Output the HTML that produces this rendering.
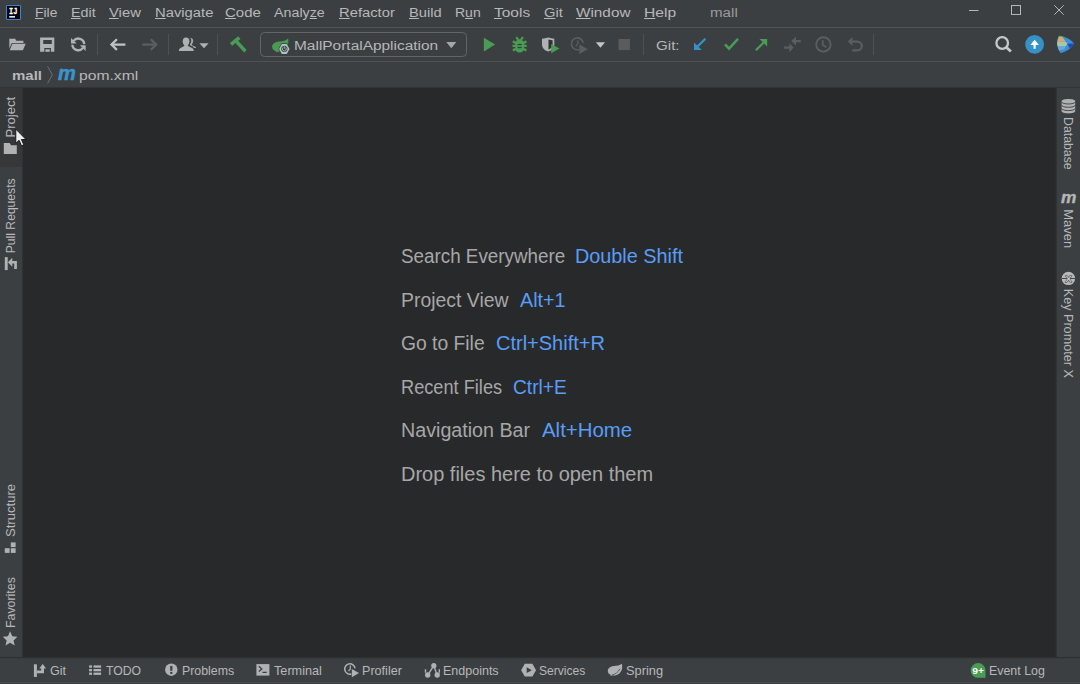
<!DOCTYPE html>
<html lang="en"><head><meta charset="utf-8"><title>mall</title><style>
html,body{margin:0;padding:0;background:#3c3f41;}
body{width:1080px;height:684px;position:relative;overflow:hidden;font-family:"Liberation Sans",sans-serif;}
.t{position:absolute;display:block;white-space:pre;line-height:20px;height:20px;transform-origin:0 0;}
.t u{text-decoration:underline;text-decoration-thickness:1px;text-underline-offset:1px;}
.r{position:absolute;}
svg.ic{position:absolute;left:0;top:0;width:1080px;height:684px;overflow:visible;}
.sec{display:contents;}
</style></head><body>
<header class="sec menubar">
<div class="r" style="left:0;top:0;width:1080px;height:27px;background:#3c3f41"></div>
<div class="r" style="left:0;top:27px;width:1080px;height:1px;background:#515151"></div>
<svg class="ic" viewBox="0 0 1080 684" width="1080" height="684">
<g id="ij-logo">
  <rect x="6.500" y="5.500" width="14" height="14" rx="0.800" fill="#000" stroke="#3584d6" stroke-width="1.100"/>
  <text x="9" y="14.300" opacity="0.990" font-family="'Liberation Mono',monospace" font-weight="700" font-size="9.200" fill="#fff" stroke="#fff" stroke-width="0.300" textLength="8.400" lengthAdjust="spacingAndGlyphs">IJ</text>
  <rect x="9.2" y="16.1" width="5.8" height="1.5" fill="#fff"/>
</g>
<g id="win-controls" stroke="#b4b6b7" stroke-width="1" fill="none">
  <path d="M969 10.5h9.5"/>
  <rect x="1011.5" y="5.5" width="9" height="9"/>
  <path d="M1054.3 5.3l9.4 9.4M1063.7 5.3l-9.4 9.4"/>
</g>
</svg>
<span class="t" style="font-size:13.7px;color:#b6b8b9;left:35.17px;top:3.35px;transform:scaleX(1.0120);"><u>F</u>ile</span>
<span class="t" style="font-size:13.7px;color:#b6b8b9;left:71.12px;top:3.27px;transform:scaleX(1.0462);"><u>E</u>dit</span>
<span class="t" style="font-size:13.7px;color:#b6b8b9;left:108.90px;top:3.25px;transform:scaleX(1.0812);"><u>V</u>iew</span>
<span class="t" style="font-size:13.7px;color:#b6b8b9;left:154.54px;top:3.25px;transform:scaleX(1.0809);"><u>N</u>avigate</span>
<span class="t" style="font-size:13.7px;color:#b6b8b9;left:225.43px;top:3.31px;transform:scaleX(1.0962);"><u>C</u>ode</span>
<span class="t" style="font-size:13.7px;color:#b6b8b9;left:274.14px;top:3.27px;transform:scaleX(1.0429);">Analy<u>z</u>e</span>
<span class="t" style="font-size:13.7px;color:#b6b8b9;left:338.90px;top:3.25px;transform:scaleX(1.0791);"><u>R</u>efactor</span>
<span class="t" style="font-size:13.7px;color:#b6b8b9;left:408.74px;top:3.25px;transform:scaleX(1.0722);"><u>B</u>uild</span>
<span class="t" style="font-size:13.7px;color:#b6b8b9;left:454.57px;top:3.35px;transform:scaleX(1.0226);">R<u>u</u>n</span>
<span class="t" style="font-size:13.7px;color:#b6b8b9;left:494.00px;top:3.40px;transform:scaleX(1.1322);"><u>T</u>ools</span>
<span class="t" style="font-size:13.7px;color:#b6b8b9;left:544.13px;top:3.25px;transform:scaleX(1.0739);"><u>G</u>it</span>
<span class="t" style="font-size:13.7px;color:#b6b8b9;left:575.90px;top:3.38px;transform:scaleX(1.1185);"><u>W</u>indow</span>
<span class="t" style="font-size:13.7px;color:#b6b8b9;left:643.89px;top:3.31px;transform:scaleX(1.1416);"><u>H</u>elp</span>
<span class="t" style="font-size:13.7px;color:#999b9c;left:710.38px;top:3.31px;transform:scaleX(1.1063);">mall</span>
</header>
<div class="sec toolbar">
<div class="r" style="left:0;top:28px;width:1080px;height:33px;background:#3c3f41"></div>
<div class="r" style="left:0;top:61px;width:1080px;height:1px;background:#515151"></div>
<div class="r combo" style="left:260px;top:32px;width:207px;height:25px;box-sizing:border-box;border:1px solid #626466;border-radius:4.5px;"></div>
<svg class="ic" viewBox="0 0 1080 684" width="1080" height="684">
<g id="tb-sep" fill="#4e5052">
  <rect x="97" y="34" width="1" height="21"/>
  <rect x="168" y="34" width="1" height="21"/>
  <rect x="217" y="34" width="1" height="21"/>
  <rect x="643" y="34" width="1" height="21"/>
  <rect x="873" y="34" width="1" height="21"/>
</g>
<g id="tb-open" fill="#afb1b3">
  <path d="M9.3 38.7h5.9l1 2.1h7.2v2.3h-11.6l-2.5 5.4z"/>
  <path d="M12.4 43.8h13.3l-2.8 6.4h-13.2z"/>
</g>
<g id="tb-save">
  <path fill="#afb1b3" fill-rule="evenodd" d="M40.1 37.6h14.2v14.2h-3.4v-3.7h-6.6v3.7h-4.2zM43.2 40h8.6v3.9h-8.6z"/>
  <rect x="45.4" y="49.3" width="4.3" height="2.5" fill="#afb1b3"/>
</g>
<g id="tb-refresh" fill="#afb1b3">
  <path d="M71 37.9v5.7h5.7z"/>
  <path d="M85.6 50.9v-5.7h-5.7z"/>
  <path fill="none" stroke="#afb1b3" stroke-width="2.4" d="M73.6 40.9a5.9 5.9 0 0 1 10.6 3.2"/>
  <path fill="none" stroke="#afb1b3" stroke-width="2.4" d="M83 47.9a5.9 5.9 0 0 1 -10.6 -3.2"/>
</g>
<g id="tb-back" fill="none" stroke="#bfc1c3" stroke-width="2.300">
  <path d="M111.500 44.600h13.900"/>
  <path d="M116.900 39.300l-5.400 5.300 5.400 5.300"/>
</g>
<g id="tb-fwd" fill="none" stroke="#5b5d5f" stroke-width="2.300">
  <path d="M142.300 44.600h13.900"/>
  <path d="M150.800 39.300l5.400 5.300-5.400 5.300"/>
</g>
<g id="tb-users" fill="#afb1b3">
  <path d="M189.2 38.4c1.6-1 4-0.300 4 2.400 0 1.500-0.500 2.700-1.300 3.500l0.100 1 3.400 1.500c0.500 0.200 0.600 0.800 0.600 1.300h-2.200c-0.300-1-1-1.600-2-2l-1.800-0.800v-1.200c0.800-0.900 1.200-2.200 1.200-3.500 0-0.900-0.200-1.700-0.600-2.300z" opacity="0.9"/>
  <path d="M186 37.500c2.200 0 3.400 1.600 3.400 3.700 0 1.600-0.600 3-1.500 3.900v1l4.200 1.800c1 0.400 1.500 1.300 1.500 2.300v0.700h-14.600v-0.700c0-1 0.500-1.900 1.500-2.300l3.700-1.800v-1c-0.900-0.900-1.500-2.300-1.500-3.900 0-2.100 1.200-3.700 3.300-3.700z"/>
  <path d="M199.400 43.300h9.200l-4.600 5z"/>
</g>
<g id="tb-build" fill="#499c54">
  <path d="M229.800 42.900l8.400-6.650 2.300 2.700-8.300 6.700z"/>
  <path d="M234.500 41.900l2.500-2.500 9.600 10.600-2.400 2.400z"/>
</g>
<g id="tb-runcfg-icon">
  <path fill="#4b9a52" d="M288.100 38.300C286.500 40.800 282.500 41.200 279 41.600C275.200 42.100 272.100 43.800 272.100 46.800C272.100 49.300 274 51 276.300 51.500C276.200 51.800 276 52 275.800 52.300C276.600 52.400 277.300 52.200 277.600 51.800C281.500 52 285.400 50.300 287.200 46.700C288.600 44 288.600 41 288.100 38.300Z"/>
  <path fill="#3c3f41" d="M281.400 43.200h5.800l3 5.700-3 5.700h-5.800l-3-5.700z"/>
  <path fill="#a9c3c2" fill-rule="evenodd" d="M281.800 43.900h5l2.700 5-2.700 5h-5l-2.700-5zM284.300 45.700a3.200 3.200 0 1 0 0.010 0z"/>
  <path fill="none" stroke="#a9c3c2" stroke-width="0.900" d="M282.900 47.500a2 2 0 1 0 2.800 0M284.300 46.400v2.400"/>
</g>
<path id="tb-combo-arrow" fill="#a4a7a9" d="M446.300 41.900h10l-5 6.400z"/>
<path id="tb-run" fill="#499c54" d="M483.900 37.800l11.200 6.800-11.200 6.800z"/>
<g id="tb-debug">
  <path fill="none" stroke="#499c54" stroke-width="2.100" d="M516.200 37.200l2.200 2.800M523 37.200l-2.200 2.800"/>
  <path fill="none" stroke="#499c54" stroke-width="2.400" d="M512.800 41.400l2.600 1.300h8.400l2.600-1.300M512.500 45.900h14.200M512.800 50.400l2.600-1.300h8.400l2.600 1.300"/>
  <rect x="515.200" y="39.300" width="8.800" height="13.300" rx="4.300" ry="4.600" fill="#499c54"/>
  <rect x="517.500" y="43.900" width="4.200" height="1.300" fill="#3c3f41"/>
  <rect x="517.500" y="46.900" width="4.200" height="1.300" fill="#3c3f41"/>
</g>
<g id="tb-coverage">
  <path fill="#afb1b3" d="M542 38.700c2.200-0.300 4.200-0.800 6.200-1.300 2 0.500 4 1 6.100 1.300v5.500c0 3.800-2.500 6-6.100 7.300-3.700-1.300-6.200-3.500-6.200-7.300z"/>
  <path fill="#2f3133" d="M548.500 39.500c1.400 0.300 2.700 0.600 4.100 0.800v4.100c0 2.400-1.500 4-4.100 5.100z"/>
  <path fill="#499c54" d="M551.200 43.900l8.200 4.700-8.200 4.700z"/>
</g>
<g id="tb-profile" fill="none" stroke="#5b5d5f" stroke-width="1.600">
  <path d="M578.83 49.50A5.9 5.9 0 1 1 583.14 42.98"/>
  <path d="M577.800 40.200v3.600l-2.100 2.600" stroke-width="1.300"/>
  <path fill="#5b5d5f" stroke="none" d="M579.300 44.300l8.500 4.850-8.500 4.850z"/>
</g>
<path id="tb-profile-arrow" fill="#c2c4c6" d="M595.800 42.300h9.300l-4.650 5.500z"/>
<rect id="tb-stop" x="618.500" y="39" width="11.500" height="11.100" fill="#595b5d"/>
<g id="tb-git-update">
  <path fill="#3592c4" d="M694 42.500v7.500h7.900z"/>
  <path fill="none" stroke="#3592c4" stroke-width="2.300" d="M697 47l8.400-8.200"/>
</g>
<path id="tb-git-commit" fill="none" stroke="#499c54" stroke-width="2.500" d="M725 44.400l4 4.200 9-9.700"/>
<g id="tb-git-push">
  <path fill="#499c54" d="M759.400 39h7.800v7.400z"/>
  <path fill="none" stroke="#499c54" stroke-width="2.300" d="M764.200 42l-8.300 8.200"/>
</g>
<g id="tb-compare" fill="#5b5d5f">
  <path d="M791.300 41.100l4.700-4.600v3.500h4.800v2.200h-4.800v3.500z"/>
  <path d="M793.600 47.600l-4.200 4.900v-3.800h-5.300v-2.200h5.300v-3.300z"/>
</g>
<g id="tb-history" fill="none" stroke="#5b5d5f" stroke-width="1.900">
  <circle cx="823.400" cy="44.400" r="7.200"/>
  <path d="M822.700 40.300v4.700l3.700 2.300" stroke-width="1.700"/>
</g>
<g id="tb-undo">
  <path fill="#5b5d5f" d="M847.800 41.500l4.700-4.400v8.800z"/>
  <path fill="none" stroke="#5b5d5f" stroke-width="2.200" d="M852.300 41.700h5.200a4.300 4.300 0 0 1 0 8.600h-5.300"/>
</g>
<g id="tb-search" fill="none" stroke="#c6c8ca">
  <circle cx="1002.200" cy="43" r="5.800" stroke-width="2.300"/>
  <path d="M1006.300 47.300l4.600 4.200" stroke-width="2.700"/>
</g>
<g id="tb-update">
  <circle cx="1034.600" cy="44.400" r="9.400" fill="#3592c4"/>
  <path fill="#fff" d="M1034.600 39.800l4.300 5.200h-3.200v3.800h-2.200v-3.800h-3.200z"/>
</g>
<g id="tb-codota">
  <path fill="#3b8fd6" d="M1058.900 35.800c5.600 0.400 11.700 3.400 15.200 7.800-2.900 4.900-8 8.500-13.400 9.600-3.700-4.400-4.700-12.300-1.800-17.400z"/>
  <path fill="#3f9f45" d="M1058.900 35.800c1.600 0.100 3.300 0.400 4.900 0.900l-5.600 3.600c0-1.600 0.200-3.100 0.700-4.500z"/>
  <path fill="#d3a978" d="M1059.300 36.700c1.100-0.200 2.300-0.100 3.400 0.500l3 4.600h-8.500c0.300-1.900 1-3.700 2.100-5.100z"/>
  <path fill="#a9c8a2" d="M1057.200 41.800h8.500l1.700 2-1.500 2.300h-8.400c-0.400-1.400-0.500-2.900-0.300-4.300z"/>
  <path fill="#6ba7d9" d="M1057.500 46.100h8.400l-1.600 3.200-5.300 1.200c-0.700-1.400-1.200-2.900-1.500-4.400z"/>
  <path fill="#2347b3" d="M1067.400 43.800l6.700-0.200c-1.100 1.800-2.500 3.400-4.200 4.800z"/>
</g>
</svg>
<span class="t" style="font-size:13.7px;color:#b6b8b9;left:293.66px;top:36.40px;transform:scaleX(1.1281);">MallPortalApplication</span>
<span class="t" style="font-size:13.7px;color:#b6b8b9;left:655.52px;top:36.31px;transform:scaleX(1.1064);">Git:</span>
</div>
<nav class="sec navbar">
<div class="r" style="left:0;top:62px;width:1080px;height:25px;background:#3c3f41"></div>
<div class="r" style="left:0;top:87px;width:1080px;height:1px;background:#323334"></div>
<svg class="ic" viewBox="0 0 1080 684" width="1080" height="684">
<path id="nb-chevron" fill="none" stroke="#6c6e70" stroke-width="1" d="M47.600 66.300l4.700 8.500-4.700 8.500"/>
</svg>
<span class="t" style="font-size:13.7px;color:#b6b8b9;font-weight:700;left:12.03px;top:66.25px;transform:scaleX(1.0961);">mall</span>
<span class="t" style="font-size:19.5px;color:#3a94ca;font-weight:700;font-style:italic;-webkit-text-stroke:0.5px #3a94ca;left:57.82px;top:63.04px;transform:scaleX(1.0301);">m</span>
<span class="t" style="font-size:13.7px;color:#b6b8b9;left:78.95px;top:66.31px;transform:scaleX(1.1439);">pom.xml</span>
</nav>
<main class="sec editor">
<div class="r" style="left:22px;top:88px;width:1035px;height:570px;background:#313234"></div>
<div class="r" style="left:23px;top:88px;width:1033px;height:569px;background:#28292b"></div>
<div class="r" style="left:1055px;top:88px;width:1px;height:569px;background:#2b2c2e"></div>
<span class="t" style="font-size:19.5px;color:#a7a7a7;left:401.25px;top:246.24px;transform:scaleX(0.9648);">Search Everywhere</span>
<span class="t" style="font-size:19.5px;color:#589df6;left:575.28px;top:246.24px;transform:scaleX(1.0162);">Double Shift</span>
<span class="t" style="font-size:19.5px;color:#a7a7a7;left:400.81px;top:290.24px;transform:scaleX(0.9952);">Project View</span>
<span class="t" style="font-size:19.5px;color:#589df6;left:519.85px;top:290.24px;transform:scaleX(1.0128);">Alt+1</span>
<span class="t" style="font-size:19.5px;color:#a7a7a7;left:401.44px;top:333.24px;transform:scaleX(0.9893);">Go to File</span>
<span class="t" style="font-size:19.5px;color:#589df6;left:496.11px;top:333.24px;transform:scaleX(1.0251);">Ctrl+Shift+R</span>
<span class="t" style="font-size:19.5px;color:#a7a7a7;left:400.96px;top:377.24px;transform:scaleX(0.9331);">Recent Files</span>
<span class="t" style="font-size:19.5px;color:#589df6;left:512.52px;top:377.24px;transform:scaleX(0.9834);">Ctrl+E</span>
<span class="t" style="font-size:19.5px;color:#a7a7a7;left:400.86px;top:420.24px;transform:scaleX(1.0094);">Navigation Bar</span>
<span class="t" style="font-size:19.5px;color:#589df6;left:541.73px;top:420.24px;transform:scaleX(1.0471);">Alt+Home</span>
<span class="t" style="font-size:19.5px;color:#a7a7a7;left:401.44px;top:464.24px;transform:scaleX(1.0243);">Drop files here to open them</span>
</main>
<aside class="sec leftstrip">
<div class="r" style="left:0;top:88px;width:22px;height:569px;background:#3c3f41"></div>
<div class="r hover" style="left:0;top:88px;width:22px;height:79px;background:#353739"></div>
<svg class="ic" viewBox="0 0 1080 684" width="1080" height="684">
<path id="ls-project" fill="#afb1b3" d="M3.800 142.900h5.900l1.300 2.300h5.800v8.900h-13z"/>
<g id="ls-pull" fill="#afb1b3">
  <rect x="4.800" y="257.100" width="2.900" height="13"/>
  <path d="M7.800 262.300l4.500-4.500v3.200h4.600v8h-2.700v-5.400h-1.900v3.200z"/>
</g>
<g id="ls-structure" fill="#afb1b3">
  <rect x="10.800" y="542.400" width="4.800" height="4.700"/>
  <rect x="4.800" y="548.200" width="4.800" height="4.700"/>
  <rect x="10.800" y="548.200" width="4.800" height="4.700"/>
</g>
<path id="ls-fav" fill="#afb1b3" d="M10.100 631.300l2.150 4.900 5.150 0.600-3.850 3.600 1.150 5.100-4.600-2.700-4.600 2.700 1.150-5.100-3.850-3.600 5.150-0.600z"/>
</svg>
<span class="t" style="font-size:13.3px;color:#b6b8b9;left:0;top:0;transform:translate(0.59px,137.55px) rotate(-90deg) scaleX(0.9860);">Project</span>
<span class="t" style="font-size:13.3px;color:#b6b8b9;left:0;top:0;transform:translate(0.59px,253.22px) rotate(-90deg) scaleX(0.9121);">Pull Requests</span>
<span class="t" style="font-size:13.3px;color:#b6b8b9;left:0;top:0;transform:translate(0.59px,537.06px) rotate(-90deg) scaleX(0.9857);">Structure</span>
<span class="t" style="font-size:13.3px;color:#b6b8b9;left:0;top:0;transform:translate(0.59px,628.00px) rotate(-90deg) scaleX(0.9303);">Favorites</span>
</aside>
<aside class="sec rightstrip">
<div class="r" style="left:1057px;top:88px;width:23px;height:569px;background:#3c3f41"></div>
<svg class="ic" viewBox="0 0 1080 684" width="1080" height="684">
<g id="rs-db">
  <path fill="#afb1b3" d="M1061.600 101.500c0-3.200 13.600-3.200 13.600 0v9.600c0 3.200-13.600 3.200-13.600 0z"/>
  <path fill="none" stroke="#3c3f41" stroke-width="0.900" d="M1061.600 101.800c0 2.900 13.600 2.900 13.600 0M1061.600 105.100c0 2.900 13.600 2.900 13.600 0M1061.600 108.400c0 2.900 13.600 2.900 13.600 0"/>
</g>
<g id="rs-kpx">
  <circle cx="1068.400" cy="278.400" r="6.700" fill="#b7b9bb"/>
  <rect x="1061.600" y="278" width="13.600" height="0.900" fill="#3c3f41"/>
  <text x="1068.400" y="281.700" opacity="0.990" text-anchor="middle" font-family="'Liberation Sans',sans-serif" font-weight="700" font-size="9" fill="#cfd1d3" stroke="#3c3f41" stroke-width="1.100" paint-order="stroke">X</text>
</g>
</svg>
<span class="t" style="font-size:17.2px;color:#b4b6b8;font-weight:700;font-style:italic;-webkit-text-stroke:0.4px #b4b6b8;left:1060.81px;top:187.04px;transform:scaleX(1.0069);">m</span>
<span class="t" style="font-size:13.3px;color:#b6b8b9;left:0;top:0;transform:translate(1078.41px,117.00px) rotate(90deg) scaleX(0.9252);">Database</span>
<span class="t" style="font-size:13.3px;color:#b6b8b9;left:0;top:0;transform:translate(1078.41px,209.34px) rotate(90deg) scaleX(0.9727);">Maven</span>
<span class="t" style="font-size:13.3px;color:#b6b8b9;left:0;top:0;transform:translate(1078.41px,288.71px) rotate(90deg) scaleX(0.9500);">Key Promoter X</span>
</aside>
<footer class="sec statusbar">
<div class="r" style="left:0;top:657px;width:1080px;height:1px;background:#2e2f31"></div>
<div class="r" style="left:0;top:658px;width:1080px;height:1px;background:#383a3c"></div>
<div class="r" style="left:0;top:659px;width:1080px;height:25px;background:#3c3f41"></div>
<div class="r" style="left:0;top:682px;width:1080px;height:1px;background:#484a4a"></div>
<svg class="ic" viewBox="0 0 1080 684" width="1080" height="684">
<g id="bb-git" fill="#afb1b3">
  <rect x="33.900" y="664.300" width="3" height="12.600"/>
  <path d="M36.900 670.400h4.300v-1.800h-1.900l3.400-4.600 3.400 4.600h-2.100v4.600h-7.100z"/>
</g>
<g id="bb-todo" fill="#afb1b3">
  <rect x="89.100" y="665.400" width="2.900" height="2.300"/><rect x="93.500" y="665.400" width="7.600" height="2.300"/>
  <rect x="89.100" y="669" width="2.900" height="2.300"/><rect x="93.500" y="669" width="7.600" height="2.300"/>
  <rect x="89.100" y="672.600" width="2.900" height="2.300"/><rect x="93.500" y="672.600" width="7.600" height="2.300"/>
</g>
<g id="bb-problems">
  <circle cx="171.300" cy="669.700" r="6.200" fill="#afb1b3"/>
  <rect x="170.200" y="665.900" width="2.200" height="4.900" fill="#3c3f41"/>
  <rect x="170.200" y="671.900" width="2.200" height="2" fill="#3c3f41"/>
</g>
<g id="bb-terminal">
  <rect x="256.400" y="664.100" width="13" height="11.500" fill="#afb1b3"/>
  <path fill="none" stroke="#3c3f41" stroke-width="1.300" d="M258.900 666.300l2.900 2.600-2.900 2.600M262.500 672.300h4.200"/>
</g>
<g id="bb-profiler">
  <path fill="none" stroke="#afb1b3" stroke-width="1.500" d="M351.25 674.02A5.2 5.2 0 1 1 355.05 668.28"/>
  <path fill="none" stroke="#afb1b3" stroke-width="1.200" d="M350.300 665.600v3.400l-1.800 2.200"/>
  <path fill="#afb1b3" d="M351.800 669l7.200 4.100-7.200 4.100z"/>
</g>
<g id="bb-endpoints" fill="#afb1b3">
  <path fill="none" stroke="#afb1b3" stroke-width="1.400" d="M427.700 675.200l6.100-9.600 3.300 9.600M425.500 669.200v3.600M439.300 669.200v3.600"/>
  <circle cx="433.800" cy="665.700" r="2.600"/>
  <circle cx="427.700" cy="675" r="2.700"/>
  <circle cx="437.200" cy="675" r="2.700"/>
</g>
<g id="bb-services">
  <path fill="#afb1b3" d="M521.100 670.200l3.700-6.400h7.600l3.700 6.400-3.700 6.400h-7.600z"/>
  <path fill="#3c3f41" d="M526.700 667.300l5.100 2.900-5.100 2.900z"/>
</g>
<g id="bb-spring">
  <path fill="#afb1b3" d="M621.900 663.700c0.600 2.600 0.500 5.400-0.900 7.700-1.900 3.200-5.600 4.400-9 4.200-0.300 0.300-0.900 0.400-1.600 0.300 0.300-0.300 0.400-0.600 0.500-0.800-1.800-0.700-3.100-2.300-3.100-4.300 0-3 2.900-4.500 5.900-4.900 3-0.400 6.100-0.400 8.200-2.200z"/>
  <path fill="none" stroke="#3c3f41" stroke-width="0.700" d="M611.500 675.200c3.600-0.700 6.800-3 8.500-6.400"/>
</g>
<g id="bb-eventlog">
  <path fill="#499c54" d="M978.100 663a7.400 7.400 0 0 1 7.400 7.400v7.400h-7.400a7.400 7.400 0 0 1 0-14.800z"/>
  <text x="972.200" y="674.200" opacity="0.990" font-family="'Liberation Sans',sans-serif" font-weight="700" font-size="9.500" fill="#fff" textLength="11.800" lengthAdjust="spacingAndGlyphs">9+</text>
</g>
</svg>
<span class="t" style="font-size:12.4px;color:#b6b8b9;left:50.41px;top:660.70px;transform:scaleX(1.0126);">Git</span>
<span class="t" style="font-size:12.4px;color:#b6b8b9;left:105.97px;top:660.70px;transform:scaleX(0.9854);">TODO</span>
<span class="t" style="font-size:12.4px;color:#b6b8b9;left:182.01px;top:660.70px;transform:scaleX(0.9977);">Problems</span>
<span class="t" style="font-size:12.4px;color:#b6b8b9;left:273.84px;top:660.70px;transform:scaleX(1.0239);">Terminal</span>
<span class="t" style="font-size:12.4px;color:#b6b8b9;left:361.81px;top:660.70px;transform:scaleX(1.0166);">Profiler</span>
<span class="t" style="font-size:12.4px;color:#b6b8b9;left:442.76px;top:660.70px;transform:scaleX(1.0089);">Endpoints</span>
<span class="t" style="font-size:12.4px;color:#b6b8b9;left:538.71px;top:660.70px;transform:scaleX(0.9757);">Services</span>
<span class="t" style="font-size:12.4px;color:#b6b8b9;left:625.65px;top:660.70px;transform:scaleX(1.0360);">Spring</span>
<span class="t" style="font-size:12.4px;color:#b6b8b9;left:989.21px;top:660.70px;transform:scaleX(1.0001);">Event Log</span>
</footer>
<svg class="ic cursor" viewBox="0 0 1080 684" width="1080" height="684">
<path id="cursor" fill="#ededed" stroke="#111" stroke-width="0.900" stroke-linejoin="round" d="M15.800 129.100v14.200l3.300-3 2.400 5.500 2.300-1-2.400-5.300h4.600z"/>
</svg>
</body></html>
